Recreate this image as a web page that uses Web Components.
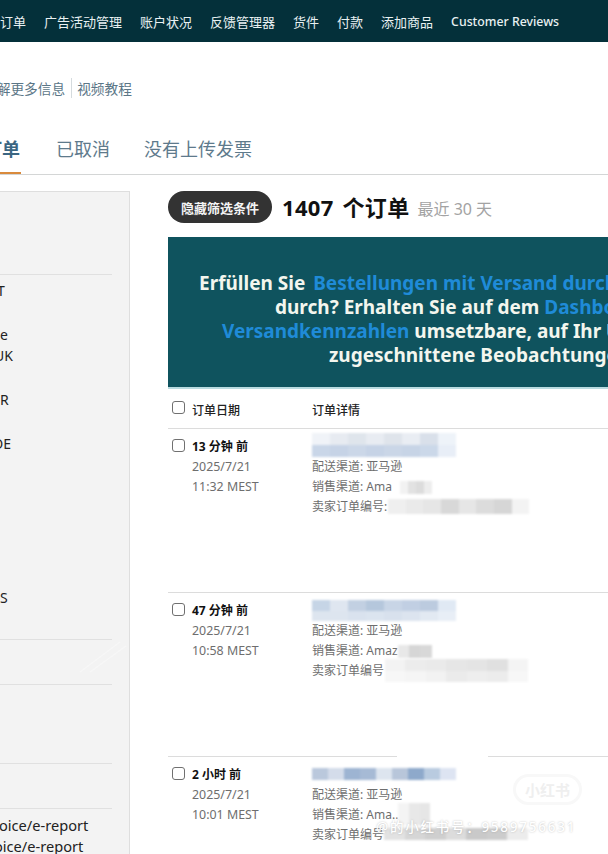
<!DOCTYPE html>
<html lang="zh">
<head>
<meta charset="utf-8">
<style>
  html, body { margin: 0; padding: 0; background: #fff; }
  body {
    width: 608px;
    height: 854px;
    overflow: hidden;
    font-family: "Noto Sans", "Noto Sans CJK SC", sans-serif;
    color: #111;
  }
</style>
</head>
<body>

<template id="top-nav-tpl">
  <style>
    :host { display: flex; height: 42px; background: #04303a; color: #e9f1f2; align-items: center; gap: 18px; font-size: 13px; white-space: nowrap; overflow: hidden; }
    ::slotted(span) { display: block; }
  </style>
  <slot></slot>
</template>

<template id="help-links-tpl">
  <style>
    :host { display: flex; align-items: center; height: 20px; margin-top: 36px; font-size: 13.7px; color: #5b7687; white-space: nowrap; }
    ::slotted(span:first-child) { padding-right: 6px; border-right: 1px solid #d5dbde; margin-right: 5px; }
  </style>
  <slot></slot>
</template>

<template id="tab-bar-tpl">
  <style>
    :host { display: flex; height: 47px; margin-top: 30px; box-sizing: border-box; border-bottom: 1px solid #d4d6d6; font-size: 18px; color: #5e7a8c; white-space: nowrap; }
    ::slotted(span) { display: block; line-height: 24px; padding-top: 9px; margin-left: 35px; }
    ::slotted(span[active]) { margin-left: 0; width: 21px; box-sizing: border-box; color: #3b6682; font-weight: 700; border-bottom: 2px solid #d98a3d; height: 46px; overflow: hidden; }
  </style>
  <slot></slot>
</template>

<template id="side-panel-tpl">
  <style>
    :host { display: block; width: 130px; flex: none; box-sizing: border-box; height: 663px; background: #f3f3f3; border: 1px solid #dedede; border-left: 0; border-bottom: 0; font-size: 14px; line-height: 20px; color: #222; overflow: hidden; }
  </style>
  <slot></slot>
</template>

<template id="side-group-tpl">
  <style>
    :host { display: block; box-sizing: border-box; width: 112px; border-bottom: 1px solid #e0e0e0; }
  </style>
  <slot></slot>
</template>

<template id="order-bar-tpl">
  <style>
    :host { display: flex; align-items: center; height: 32px; white-space: nowrap; }
    .pill { background: #333; color: #f4f4f4; border-radius: 16px; height: 32px; width: 104px; display: flex; align-items: center; justify-content: center; font-size: 13px; font-weight: 700; }
    .count { margin-left: 10px; font-size: 22px; font-weight: 700; color: #111; word-spacing: 3px; letter-spacing: .3px; position: relative; top: -1px; }
    .range { margin-left: 8px; font-size: 16px; color: #a3a3a3; position: relative; top: 1px; }
  </style>
  <span class="pill"><slot name="pill"></slot></span>
  <span class="count"><slot name="count"></slot></span>
  <span class="range"><slot name="range"></slot></span>
</template>

<template id="promo-banner-tpl">
  <style>
    :host { display: block; width: 440px; height: 152px; margin-top: 14px; box-sizing: border-box; padding-top: 34px; background: #0f535e; border-bottom: 2px solid #b9dbe0; color: #f3f6ee; font-size: 19px; font-weight: 700; line-height: 24px; white-space: nowrap; overflow: hidden; }
    ::slotted(div) { height: 24px; }
  </style>
  <slot></slot>
</template>

<template id="order-head-tpl">
  <style>
    :host { display: grid; grid-template-columns: 144px 1fr; height: 40px; box-sizing: border-box; padding-top: 2px; border-bottom: 1px solid #dcdcdc; align-items: center; font-size: 12px; color: #222; font-weight: 500; }
    .first { display: flex; align-items: center; gap: 7px; padding-left: 4px; }
    .box { width: 13px; height: 13px; box-sizing: border-box; border: 1px solid #707070; border-radius: 3px; background: #fff; margin-top: -4px; }
  </style>
  <div class="first"><span class="box"></span><slot name="date"></slot></div>
  <div><slot name="detail"></slot></div>
</template>

<template id="order-row-tpl">
  <style>
    :host { display: grid; grid-template-columns: 144px 1fr; height: 164px; box-sizing: border-box; border-bottom: 1px solid #dcdcdc; font-size: 12px; line-height: 20px; color: #6e6e6e; }
    .when { display: grid; grid-template-columns: 20px 1fr; align-content: start; padding: 8px 0 0 4px; }
    .box { width: 13px; height: 13px; box-sizing: border-box; border: 1px solid #707070; border-radius: 3px; background: #fff; margin-top: 2px; }
    .age { color: #111; font-weight: 700; font-size: 12px; }
    .stamp { font-size: 12.4px; }
    .detail { padding-top: 4px; }
    .line { display: flex; white-space: nowrap; height: 20px; }
  </style>
  <div class="when">
    <span class="box"></span>
    <div>
      <div class="age"><slot name="age"></slot></div>
      <div class="stamp"><slot name="date"></slot></div>
      <div class="stamp"><slot name="time"></slot></div>
    </div>
  </div>
  <div class="detail">
    <slot name="product"></slot>
    <div class="line"><slot name="ship"></slot></div>
    <div class="line"><slot name="sale"></slot></div>
    <div class="line"><slot name="seller"></slot></div>
  </div>
</template>

<template id="blur-bar-tpl">
  <style>
    :host { display: block; flex: none; }
    .cells { display: flex; flex-direction: column; height: 100%; filter: blur(1.2px); }
    .row { display: flex; flex: 1; }
    .row i { display: block; flex: 1; }
  </style>
  <div class="cells"></div>
</template>

<template id="stamp-mark-tpl">
  <style>
    :host { position: absolute; left: 0; top: 0; width: 608px; height: 854px; pointer-events: none; overflow: hidden; }
    .pill { position: absolute; left: 513px; top: 774px; box-sizing: border-box; width: 69px; height: 31px; border-radius: 16px; border: 3px solid #f8f8f8; color: #efefef; font-size: 15px; font-weight: 700; display: flex; align-items: center; justify-content: center; }
    .id { position: absolute; left: 376px; top: 817px; font-size: 13.5px; line-height: 20px; font-weight: 500; letter-spacing: 1.75px; color: #fff; white-space: nowrap; text-shadow: 0 0 2px rgba(110,110,110,.45); }
    .gap { position: absolute; left: 397px; top: 754px; width: 91px; height: 5px; background: #fff; }
    svg { position: absolute; left: 70px; top: 636px; }
  </style>
  <div class="gap"></div>
  <svg width="60" height="40" viewBox="0 0 60 40" fill="none" stroke="#f7f7f7" stroke-width="1.5"><path d="M10 36 L50 6"/><path d="M20 36 L56 10"/></svg>
  <div class="pill"><slot name="logo"></slot></div>
  <div class="id"><slot name="id"></slot></div>
</template>

<top-nav>
  <span>订单</span><span>广告活动管理</span><span>账户状况</span><span>反馈管理器</span><span>货件</span><span>付款</span><span>添加商品</span><span style="font-size:12.3px;font-weight:500">Customer Reviews</span>
</top-nav>

<help-links>
  <span style="margin-left:-17px">了解更多信息</span><span>视频教程</span>
</help-links>

<tab-bar>
  <span active><span style="margin-left:-16px">订单</span></span><span>已取消</span><span style="margin-left:34px">没有上传发票</span>
</tab-bar>

<div style="display:flex;margin-top:16px">
  <side-panel>
    <side-group style="height:83px"></side-group>
    <div style="height:365px;padding-top:6px;box-sizing:border-box;width:112px;border-bottom:1px solid #e0e0e0">
      <div style="margin-left:-3px">T</div>
      <div style="margin-top:24px">e</div>
      <div style="margin:1px 0 0 -6px">UK</div>
      <div style="margin-top:24px">R</div>
      <div style="margin:24px 0 0 -7px">DE</div>
      <div style="margin-top:134px">S</div>
    </div>
    <side-group style="height:45px"></side-group>
    <side-group style="height:79px"></side-group>
    <side-group style="height:45px"></side-group>
    <div style="white-space:nowrap;line-height:21px;padding-top:6px;font-size:14.6px">
      <div style="margin-left:-1px">oice/e-report</div>
      <div style="margin-left:-6px">oice/e-report</div>
    </div>
  </side-panel>

  <div style="margin-left:38px;width:440px;flex:none">
    <order-bar>
      <span slot="pill">隐藏筛选条件</span>
      <span slot="count">1407 个订单</span>
      <span slot="range">最近 30 天</span>
    </order-bar>
    <promo-banner>
      <div style="margin-left:31px">Erfüllen Sie <span style="color:#1f8bd8;margin-left:3px">Bestellungen mit Versand durch</span></div>
      <div style="margin-left:107px">durch? Erhalten Sie auf dem <span style="color:#1f8bd8">Dashboard</span></div>
      <div style="margin-left:54px"><span style="color:#1f8bd8">Versandkennzahlen</span> umsetzbare, auf Ihr Unternehmen</div>
      <div style="margin-left:161px">zugeschnittene Beobachtungen</div>
    </promo-banner>
    <order-head>
      <span slot="date">订单日期</span>
      <span slot="detail">订单详情</span>
    </order-head>

    <order-row>
      <span slot="age">13 分钟 前</span>
      <span slot="date">2025/7/21</span>
      <span slot="time">11:32 MEST</span>
      <blur-bar slot="product" style="width:144px;height:24px" colors="#f0f3f8,#e7ebf1,#dfe5ec,#e8ecf2,#dfe4eb,#e9edf3,#d9e0ea,#eef3f9|#c9d6e8,#c6d3e6,#cbd7e8,#c6d3e6,#cad6e7,#c7d4e6,#cbd8e9,#e8eef7"></blur-bar>
      <span slot="ship">配送渠道: 亚马逊</span>
      <span slot="sale">销售渠道: Ama</span>
      <blur-bar slot="sale" style="width:32px;height:13px;margin:4px 0 0 8px" colors="#f2f2f2,#e2e2e2,#dcdcdc,#ededed"></blur-bar>
      <span slot="seller">卖家订单编号:</span>
      <blur-bar slot="seller" style="width:141px;height:15px;margin:2px 0 0 1px" colors="#efefef,#eaeaea,#e6e6e6,#d8d8d8,#e6e6e6,#dcdcdc,#d6d6d6,#f3f3f3"></blur-bar>
    </order-row>

    <order-row>
      <span slot="age">47 分钟 前</span>
      <span slot="date">2025/7/21</span>
      <span slot="time">10:58 MEST</span>
      <blur-bar slot="product" style="width:144px;height:21px;margin-top:3px" colors="#c6d5e6,#dfe6f0,#c2d0e2,#b5c7dc,#c8d5e6,#c1cfe3,#bccbdf,#e0e9f4|#dde5ef,#dde5ef,#d9e2ee,#dbe4ef,#d8e1ed,#dce4ef,#e2e9f2,#e8eef6"></blur-bar>
      <span slot="ship">配送渠道: 亚马逊</span>
      <span slot="sale">销售渠道: Amaz</span>
      <blur-bar slot="sale" style="width:34px;height:13px;margin:4px 0 0 0" colors="#e8e8e8,#d6d6d6,#d8d8d8"></blur-bar>
      <span slot="seller">卖家订单编号</span>
      <blur-bar slot="seller" style="width:143px;height:23px;margin:-2px 0 0 1px" colors="#f3f3f3,#ececec,#eaeaea,#e6e6e6,#e4e4e4,#e0e0e0,#f4f4f4|#f7f7f7,#f5f5f5,#f2f2f2,#ebebeb,#eeeeee,#ececec,#f7f7f7"></blur-bar>
    </order-row>

    <order-row style="height:97px;border-bottom:0">
      <span slot="age">2 小时 前</span>
      <span slot="date">2025/7/21</span>
      <span slot="time">10:01 MEST</span>
      <blur-bar slot="product" style="width:144px;height:12px;margin:7px 0 5px" colors="#bac8dc,#d4dcea,#9db4d2,#a6bad5,#dde5ef,#b8c6da,#8ea9cb,#b9cbe0,#dde4f2"></blur-bar>
      <span slot="ship">配送渠道: 亚马逊</span>
      <span slot="sale">销售渠道: Ama..</span>
      <blur-bar slot="sale" style="width:32px;height:22px;margin:-2px 0 0 0" colors="#f4f4f4,#e8e8e8,#e6e6e6"></blur-bar>
      <span slot="seller">卖家订单编号</span>
      <blur-bar slot="seller" style="width:144px;height:12px;margin:3px 0 0 0" colors="#e2e2e2,#d6d6d6,#cfcfcf,#dcdcdc,#c9c9c9,#cccccc,#ececec"></blur-bar>
    </order-row>
  </div>
</div>

<stamp-mark>
  <span slot="logo">小红书</span>
  <span slot="id">@的小红书号：9589756631</span>
</stamp-mark>

<script>
  // plain wrappers: clone the template into an open shadow root
  const simple = ['top-nav', 'help-links', 'tab-bar', 'side-panel', 'side-group', 'order-bar', 'promo-banner', 'order-head', 'order-row', 'stamp-mark'];

  simple.forEach((name) => {
    const tpl = document.getElementById(name + '-tpl');
    window.customElements.define(name, class extends HTMLElement {
      constructor() {
        super();
        this.attachShadow({ mode: 'open' });
        this.shadowRoot.appendChild(tpl.content.cloneNode(true));
      }
    });
  });

  class BlurBar extends HTMLElement {
    constructor() {
      super();
      this.attachShadow({ mode: 'open' });
      this.shadowRoot.appendChild(document.getElementById('blur-bar-tpl').content.cloneNode(true));
    }

    connectedCallback() {
      const cells = this.shadowRoot.querySelector('.cells');
      // colors="a,b,c|d,e,f" : one strip of cells per | group
      (this.getAttribute('colors') || '').split('|').forEach((group) => {
        const row = document.createElement('div');
        row.className = 'row';
        group.split(',').forEach((c) => {
          const cell = document.createElement('i');
          cell.style.background = c;
          row.appendChild(cell);
        });
        cells.appendChild(row);
      });
    }
  }

  window.customElements.define('blur-bar', BlurBar);
</script>
</body>
</html>
